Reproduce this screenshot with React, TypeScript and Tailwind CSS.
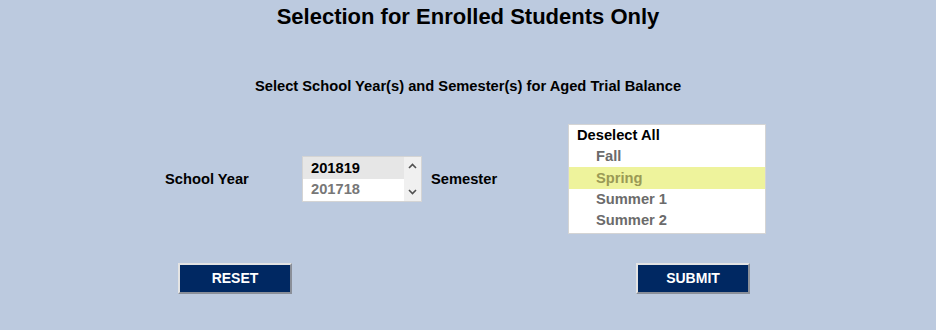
import { FunctionComponent } from 'react'

const years = ['201819', '201718']
const semesters = ['Fall', 'Spring', 'Summer 1', 'Summer 2']

const Chevron: FunctionComponent<{ up?: boolean }> = ({ up }) => (
  <svg width="9" height="6" viewBox="0 0 9 6" className="text-[#505050]">
    <path d={up ? 'M1 5 L4.5 1.5 L8 5' : 'M1 1 L4.5 4.5 L8 1'} fill="none" stroke="currentColor" strokeWidth="1.6" />
  </svg>
)

const NavyButton: FunctionComponent<{ label: string }> = ({ label }) => (
  <button className="w-[114px] h-[31px] bg-[#002862] text-white text-[14px] font-bold border-t-2 border-l-2 border-t-[#e4e4e4] border-l-[#e4e4e4] border-b-2 border-r-2 border-b-[#8a8f99] border-r-[#8a8f99]">
    {label}
  </button>
)

const App: FunctionComponent = () => {
  return (
    <div
      className="w-[936px] h-[330px] bg-[#bccadf] text-black overflow-hidden"
      style={{ fontFamily: '"Liberation Sans", Arial, sans-serif' }}
    >
      <h1 className="pt-[4px] text-center text-[22px] leading-[26px] font-bold">Selection for Enrolled Students Only</h1>

      <p className="mt-[47px] text-center text-[14.7px] leading-[18px] font-bold">
        Select School Year(s) and Semester(s) for Aged Trial Balance
      </p>

      <div className="mt-[29px] flex items-center pl-[165px] text-[14.7px] font-bold">
        <div className="w-[137px]">School Year</div>

        <div className="flex w-[120px] h-[46px] border border-[#d4d4d4] bg-white">
          <div className="flex-1 flex flex-col">
            {years.map((y, i) => (
              <div
                key={y}
                className={
                  i === 0
                    ? 'h-[22px] leading-[22px] pl-[8px] bg-[#e6e6e6] text-black'
                    : 'h-[22px] leading-[20px] pl-[8px] text-[#777]'
                }
              >
                {y}
              </div>
            ))}
          </div>
          <div className="w-[17px] bg-[#f0f0f0] flex flex-col items-center justify-between py-[6px]">
            <Chevron up />
            <Chevron />
          </div>
        </div>

        <div className="w-[146px] pl-[9px]">Semester</div>

        <div className="w-[198px] h-[110px] border border-[#d4d4d4] bg-white">
          <div className="h-[21px] leading-[21px] pl-[8px] text-black">Deselect All</div>
          {semesters.map(s => (
            <div
              key={s}
              className={
                s === 'Spring'
                  ? 'h-[22px] leading-[22px] pl-[27px] bg-[#eef39c] text-[#9a9a55]'
                  : 'h-[21px] leading-[21px] pl-[27px] text-[#6b6b6b]'
              }
            >
              {s}
            </div>
          ))}
        </div>
      </div>

      <div className="mt-[29px] flex pl-[178px] gap-[344px]">
        <NavyButton label="RESET" />
        <NavyButton label="SUBMIT" />
      </div>
    </div>
  )
}

export default App
